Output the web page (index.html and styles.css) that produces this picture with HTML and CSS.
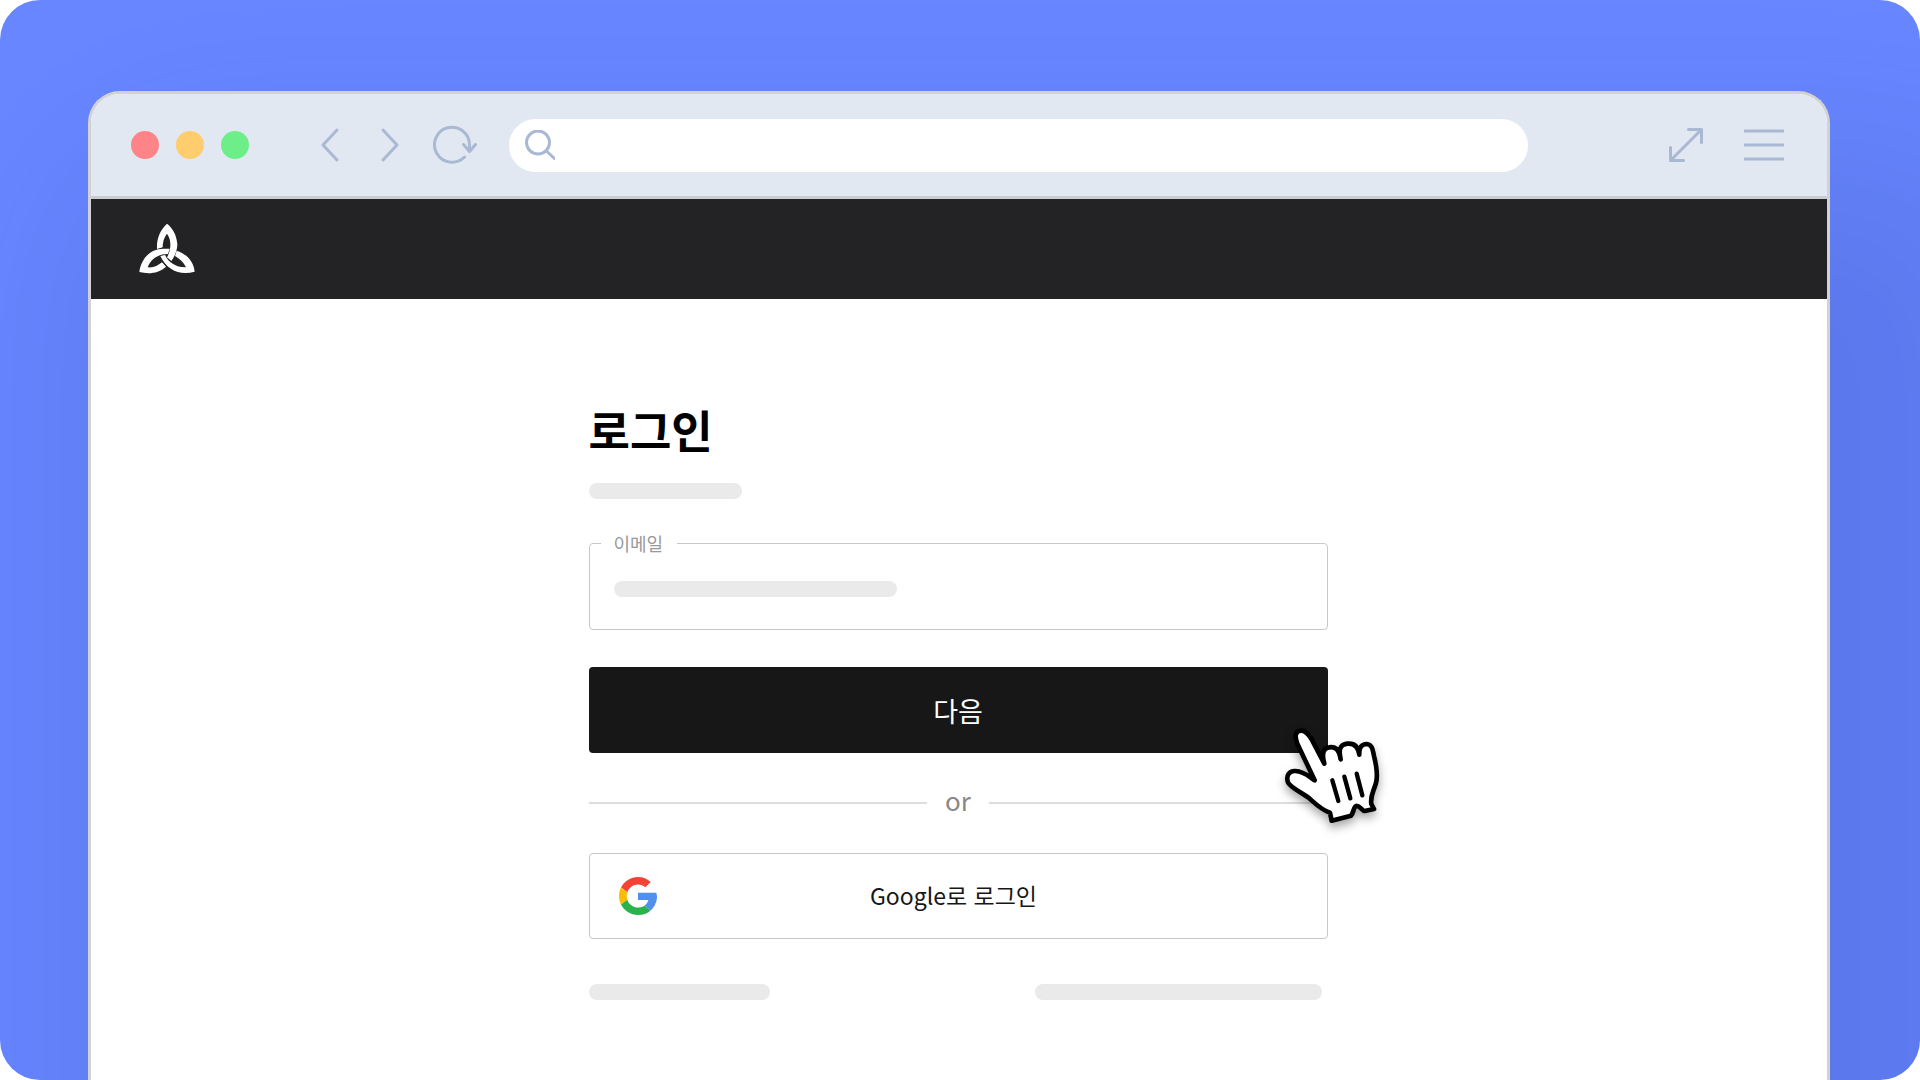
FILE: index.html
```
<!DOCTYPE html>
<html lang="ko">
<head>
    <meta charset="UTF-8">
    <meta name="viewport" content="width=device-width, initial-scale=1.0">
    <title>로그인</title>
    <link rel="stylesheet" href="styles.css">
</head>
<body>
    <div class="stage">
        <div class="browser">
            <div class="toolbar">
                <div class="dots">
                    <span class="dot red"></span>
                    <span class="dot yellow"></span>
                    <span class="dot green"></span>
                </div>
                <div class="nav-buttons">
                    <button type="button" class="icon-button" aria-label="Back">
                        <svg width="20" height="36" viewBox="0 0 20 36"><path d="M17 3L3 18l14 15"/></svg>
                    </button>
                    <button type="button" class="icon-button" aria-label="Forward">
                        <svg width="20" height="36" viewBox="0 0 20 36"><path d="M3 3l14 15L3 33"/></svg>
                    </button>
                    <button type="button" class="icon-button" aria-label="Reload">
                        <svg width="46" height="40" viewBox="0 0 46 40"><path d="M32.500 32A17.500 17.500 0 1 1 37.500 20V26.500M31.500 19.500l6 7L43.500 19.500"/></svg>
                    </button>
                </div>
                <div class="address">
                    <svg width="30" height="30" viewBox="0 0 30 30"><circle cx="13" cy="12.500" r="11.500"/><path d="M21.500 21L30 29"/></svg>
                    <input type="text" aria-label="Address">
                </div>
                <div class="tools">
                    <button type="button" class="icon-button" aria-label="Expand">
                        <svg width="36" height="36" viewBox="0 0 36 36"><path d="M20.500 2.500h13v13M33.500 2.500l-31 31M2.500 20.500v13h13"/></svg>
                    </button>
                    <button type="button" class="icon-button" aria-label="Menu">
                        <svg width="40" height="36" viewBox="0 0 40 36"><path d="M1 4h38M1 18h38M1 32h38"/></svg>
                    </button>
                </div>
            </div>

            <header class="site-header">
                <svg class="logo" width="56" height="52" viewBox="56 40 168 156">
                    <path d="M140 42C120 60 108 87 110 118l17-5C127 98 131 83 140 72C153 90 154 117 140 143l13 11C165 138 171 120 171 103C169 77 158 56 140 42Z"/>
                    <path d="M57 187C62 148 90 116 130 117h18l-5 16C113 132 90 150 82 173C100 175 112 168 125 158l12 13C115 191 86 194 57 187Z"/>
                    <path d="M120 139l14-3C144 158 168 174 197 173C190 157 178 147 164 139l5-16C199 133 220 155 223 186C180 197 141 184 120 139Z"/>
                </svg>
            </header>

            <main class="content">
                <form class="login">
                    <h1>로그인</h1>
                    <div class="skeleton subtitle"></div>

                    <fieldset class="field">
                        <legend><label for="email">이메일</label></legend>
                        <div class="field-body">
                            <input type="email" id="email">
                            <span class="skeleton value"></span>
                        </div>
                    </fieldset>

                    <div class="next">
                        <button type="button" class="next-button">다음</button>
                        <!-- hand pointer over the button corner -->
                        <svg class="pointer" width="130" height="130" viewBox="0 0 390 390">
                            <path class="hand" d="M134 211L82 101C74 82 74 62 93 62C108 61 117 75 125 88L163 161C156 136 157 114 178 112C198 109 208 121 212 148C206 122 208 104 232 101C254 99 265 112 268 134C266 112 276 102 290 102C306 103 308 118 312 138C320 170 324 196 318 219C310 246 300 258 304 282L312 297L284 303C276 302 270 286 258 288C250 292 252 307 243 317L185 332L180 308C154 300 135 280 117 264C96 248 60 232 54 217C47 197 58 182 76 183C104 184 119 202 134 211Z"/>
                            <path class="lines" d="M187 211l18 62M223 200l18 65M260 191l17 65"/>
                        </svg>
                    </div>

                    <div class="divider"><span>or</span></div>

                    <button type="button" class="google-button">
                        <svg width="38" height="38" viewBox="0 0 48 48">
                            <path fill="#f44336" d="M24 9.500c3.540 0 6.710 1.220 9.210 3.600l6.850-6.850C35.900 2.380 30.470 0 24 0 14.620 0 6.510 5.380 2.560 13.220l7.980 6.190C12.430 13.720 17.740 9.500 24 9.500z"/>
                            <path fill="#528ff5" d="M46.980 20H24v9.020h12.940c-.58 2.960-2.260 5.480-4.780 7.180l7.730 6C44.400 38.020 48 31.800 48 24.500c0-1.600-.4-3.100-1.020-4.500z"/>
                            <path fill="#fbbc05" d="M10.530 28.590c-.48-1.450-.76-2.990-.76-4.590s.27-3.140.76-4.590l-7.980-6.190C.92 16.460 0 20.120 0 24c0 3.880.92 7.540 2.560 10.780l7.970-6.190z"/>
                            <path fill="#2bb24c" d="M24 48c6.480 0 11.930-2.130 15.890-5.810l-7.730-6c-2.150 1.450-4.920 2.300-8.160 2.300-6.260 0-11.570-4.220-13.470-9.910l-7.980 6.190C6.510 42.620 14.620 48 24 48z"/>
                        </svg>
                        <span>Google로 로그인</span>
                    </button>

                    <div class="links">
                        <div class="skeleton link-short"></div>
                        <div class="skeleton link-long"></div>
                    </div>
                </form>
            </main>
        </div>
    </div>
</body>
</html>
```
FILE: styles.css
```
* {
    box-sizing: border-box;
}

body {
    margin: 0;
    background-color: #ffffff;
    font-family: "Noto Sans CJK KR", sans-serif;
}

button {
    font-family: inherit;
    cursor: pointer;
}

.stage {
    display: flex;
    min-height: 100vh;
    padding: 91px 90px 0 88px;
    background-color: #6786ff;
    border-radius: 40px;
    overflow: hidden;
}

.browser {
    flex: 1;
    display: flex;
    flex-direction: column;
    background-color: #ffffff;
    border: 3px solid #d2d2d4;
    border-bottom: none;
    border-radius: 32px 32px 0 0;
    box-shadow: 90px 160px 180px 90px rgba(0, 0, 80, 0.1);
}

/* toolbar */
.toolbar {
    display: flex;
    align-items: center;
    height: 105px;
    padding: 0 43px 0 40px;
    background-color: #e2e8f2;
    border-bottom: 3px solid #cbcccf;
    border-radius: 29px 29px 0 0;
}

.toolbar svg {
    display: block;
    flex: none;
    fill: none;
    stroke: #a9b8d3;
    stroke-width: 3;
    stroke-linecap: round;
    stroke-linejoin: round;
}

.dots {
    display: flex;
    gap: 17px;
}

.dot {
    width: 28px;
    height: 28px;
    border-radius: 50%;
}

.red {
    background-color: #ff8488;
}

.yellow {
    background-color: #ffcc6e;
}

.green {
    background-color: #6eee88;
}

.nav-buttons {
    display: flex;
    align-items: center;
    gap: 40px;
    margin-left: 71px;
}

.nav-buttons .icon-button:last-child {
    margin-left: -8px;
}

.icon-button {
    padding: 0;
    border: none;
    background: none;
}

.address {
    flex: 1;
    display: flex;
    align-items: center;
    gap: 16px;
    height: 53px;
    margin: 0 140px 0 31px;
    padding: 0 20px 0 16px;
    background-color: #ffffff;
    border-radius: 27px;
}

.address input {
    flex: 1;
    border: none;
    outline: none;
    background: none;
    font-size: 20px;
}

.tools {
    display: flex;
    align-items: center;
    gap: 40px;
}

/* page inside the browser */
.site-header {
    display: flex;
    align-items: center;
    height: 100px;
    padding-left: 48px;
    background-color: #232325;
}

.logo {
    fill: #ffffff;
}

.content {
    flex: 1;
    padding: 101px 26px 40px 24px;
}

.login {
    max-width: 739px;
    margin: 0 auto;
}

h1 {
    margin: 0 0 23px;
    color: #000000;
    font-size: 45px;
    font-weight: 700;
    line-height: 60px;
}

.skeleton {
    height: 16px;
    background-color: #eaeaea;
    border-radius: 8px;
}

.subtitle {
    width: 153px;
}

.field {
    margin: 32px 0 37px;
    padding: 0 24px 6px 11px;
    border: 1px solid #c8c8c8;
    border-radius: 4px;
}

.field legend {
    padding: 0 14px 0 13px;
    color: #999999;
    font-size: 18px;
    line-height: 24px;
}

.field-body {
    display: grid;
    align-items: center;
    height: 68px;
    padding-left: 13px;
}

.field-body > * {
    grid-area: 1 / 1;
}

.field-body input {
    width: 100%;
    height: 40px;
    padding: 0;
    border: none;
    outline: none;
    background: none;
    font-size: 24px;
}

.value {
    width: 283px;
    pointer-events: none;
}

.next {
    position: relative;
}

.next-button {
    display: block;
    width: 100%;
    height: 86px;
    border: none;
    border-radius: 4px;
    background-color: #171717;
    color: #ffffff;
    font-size: 27px;
}

.pointer {
    position: absolute;
    top: 43px;
    right: -72px;
    overflow: visible;
    pointer-events: none;
    filter: drop-shadow(0 5px 5px rgba(0, 0, 0, 0.35));
}

.hand {
    fill: #ffffff;
    stroke: #000000;
    stroke-width: 14;
    stroke-linejoin: round;
}

.lines {
    fill: none;
    stroke: #000000;
    stroke-width: 13;
    stroke-linecap: round;
}

.divider {
    display: flex;
    align-items: center;
    gap: 18px;
    height: 100px;
    color: #888888;
    font-size: 26px;
}

.divider span {
    padding-bottom: 7px;
}

.divider::before,
.divider::after {
    content: "";
    flex: 1;
    height: 2px;
    background-color: #dddddd;
}

.google-button {
    display: flex;
    align-items: center;
    width: 100%;
    height: 86px;
    padding: 0 76px 0 29px;
    border: 1px solid #c8c8c8;
    border-radius: 4px;
    background-color: #ffffff;
    color: #171717;
    font-size: 23px;
}

.google-button span {
    flex: 1;
    padding-bottom: 2px;
}

.links {
    display: flex;
    justify-content: space-between;
    margin-top: 45px;
    padding-right: 6px;
}

.link-short {
    width: 181px;
}

.link-long {
    width: 287px;
}
```
